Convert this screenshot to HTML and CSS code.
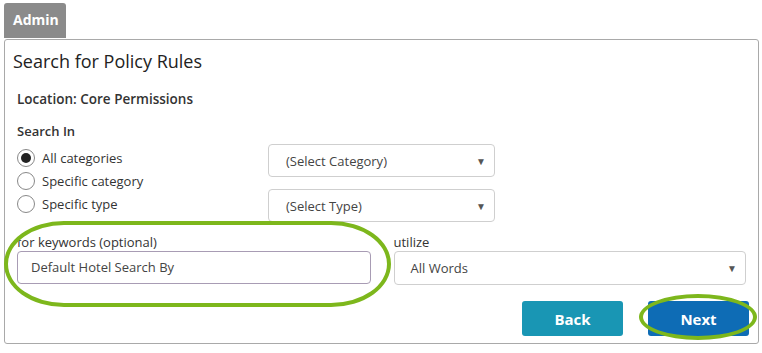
FILE: index.html
```html
<!DOCTYPE html>
<html>
<head>
<meta charset="utf-8">
<link rel="stylesheet" href="styles.css">
</head>
<body>
<div class="tab">Admin</div>
<div class="panel">
  <h1 class="title">Search for Policy Rules</h1>
  <div class="location">Location: Core Permissions</div>
  <div class="section-label">Search In</div>
  <div class="search-grid">
    <div class="radios">
      <label class="radio-row"><span class="radio checked"></span>All categories</label>
      <label class="radio-row"><span class="radio"></span>Specific category</label>
      <label class="radio-row"><span class="radio"></span>Specific type</label>
    </div>
    <div class="selects">
      <div class="select small"><span>(Select Category)</span><span class="arrow">▼</span></div>
      <div class="select small"><span>(Select Type)</span><span class="arrow">▼</span></div>
    </div>
  </div>
  <div class="keyword-row">
    <div class="field keywords">
      <div class="field-label">for keywords (optional)</div>
      <div class="input">Default Hotel Search By</div>
      <div class="highlight highlight-keywords"></div>
    </div>
    <div class="field utilize">
      <div class="field-label">utilize</div>
      <div class="select wide"><span>All Words</span><span class="arrow">▼</span></div>
    </div>
  </div>
  <div class="actions">
    <button class="btn back">Back</button>
    <div class="next-wrap">
      <button class="btn next">Next</button>
      <div class="highlight highlight-next"></div>
    </div>
  </div>
</div>
</body>
</html>
```

FILE: styles.css
```css
* { box-sizing: border-box; }
html, body { margin: 0; padding: 0; background: #fff; }
body {
  font-family: "Open Sans", "Noto Sans", sans-serif;
  color: #333;
  width: 762px;
  height: 353px;
  overflow: hidden;
}
.tab {
  margin: 3px 0 0 4px;
  width: 62px;
  height: 35px;
  background: #8b8b8b;
  border-radius: 3px 3px 0 0;
  color: #fff;
  font-weight: 700;
  font-size: 14px;
  line-height: 34px;
  padding-left: 9px;
}
.panel {
  margin: 1px 0 0 4px;
  width: 755px;
  height: 305px;
  border: 1px solid #a9a9a9;
  border-radius: 3px;
  padding: 9px 12px 0 12px;
  position: relative;
}
.title {
  margin: 0 0 0 -4px;
  font-size: 18px;
  font-weight: 400;
  line-height: 24px;
  color: #222;
}
.location {
  margin-top: 17px;
  font-size: 13.5px;
  line-height: 18px;
  font-weight: 600;
  color: #333;
}
.section-label {
  margin-top: 14px;
  font-size: 13px;
  line-height: 18px;
  font-weight: 600;
  color: #333;
}
.search-grid {
  margin-top: 4px;
  display: grid;
  grid-template-columns: 251px 227px;
}
.radios {
  padding-top: 2px;
  display: flex;
  flex-direction: column;
}
.radio-row {
  display: flex;
  align-items: center;
  height: 23px;
  font-size: 13px;
  color: #333;
  gap: 7px;
}
.radio {
  width: 18px;
  height: 18px;
  border: 1px solid #888;
  border-radius: 50%;
  background: #fff;
  position: relative;
  flex: none;
}
.radio.checked::after {
  content: "";
  position: absolute;
  left: 3px; top: 3px;
  width: 10px; height: 10px;
  border-radius: 50%;
  background: #222;
}
.selects {
  display: flex;
  flex-direction: column;
  gap: 12px;
}
.select {
  display: flex;
  align-items: center;
  justify-content: space-between;
  height: 33px;
  border: 1px solid #cfcfcf;
  border-radius: 4px;
  font-size: 13px;
  color: #444;
  padding: 0 8px 0 17px;
}
.arrow {
  font-size: 10px;
  color: #555;
}
.keyword-row {
  margin-top: 11px;
  display: flex;
  gap: 23px;
}
.field { position: relative; }
.keywords { width: 354px; }
.utilize { width: 353px; }
.field-label {
  font-size: 13px;
  line-height: 18px;
  color: #333;
  margin-bottom: 0;
}
.input {
  height: 33px;
  border: 1px solid #a89cb4;
  border-radius: 4px;
  font-size: 13px;
  color: #444;
  line-height: 31px;
  padding-left: 13px;
}
.select.wide { height: 34px; padding-left: 16px; padding-right: 8px; }
.actions {
  margin-top: 16px;
  display: flex;
  justify-content: flex-end;
  gap: 25px;
  margin-right: -3px;
}
.btn {
  width: 101px;
  height: 35px;
  border: none;
  border-radius: 3px;
  color: #fff;
  font-family: inherit;
  font-weight: 700;
  font-size: 15px;
}
.back { background: #1996b4; margin-left: 1px; }
.next { background: #0e6cb5; }
.next-wrap { position: relative; }
.highlight {
  position: absolute;
  border: 4px solid #7db71c;
  pointer-events: none;
}
.highlight-keywords {
  left: -13px;
  top: -12px;
  width: 387px;
  height: 86px;
  border-radius: 60px / 43px;
}
.highlight-next {
  left: -9px;
  top: -7px;
  width: 118px;
  height: 46px;
  border-radius: 50%;
}
```
